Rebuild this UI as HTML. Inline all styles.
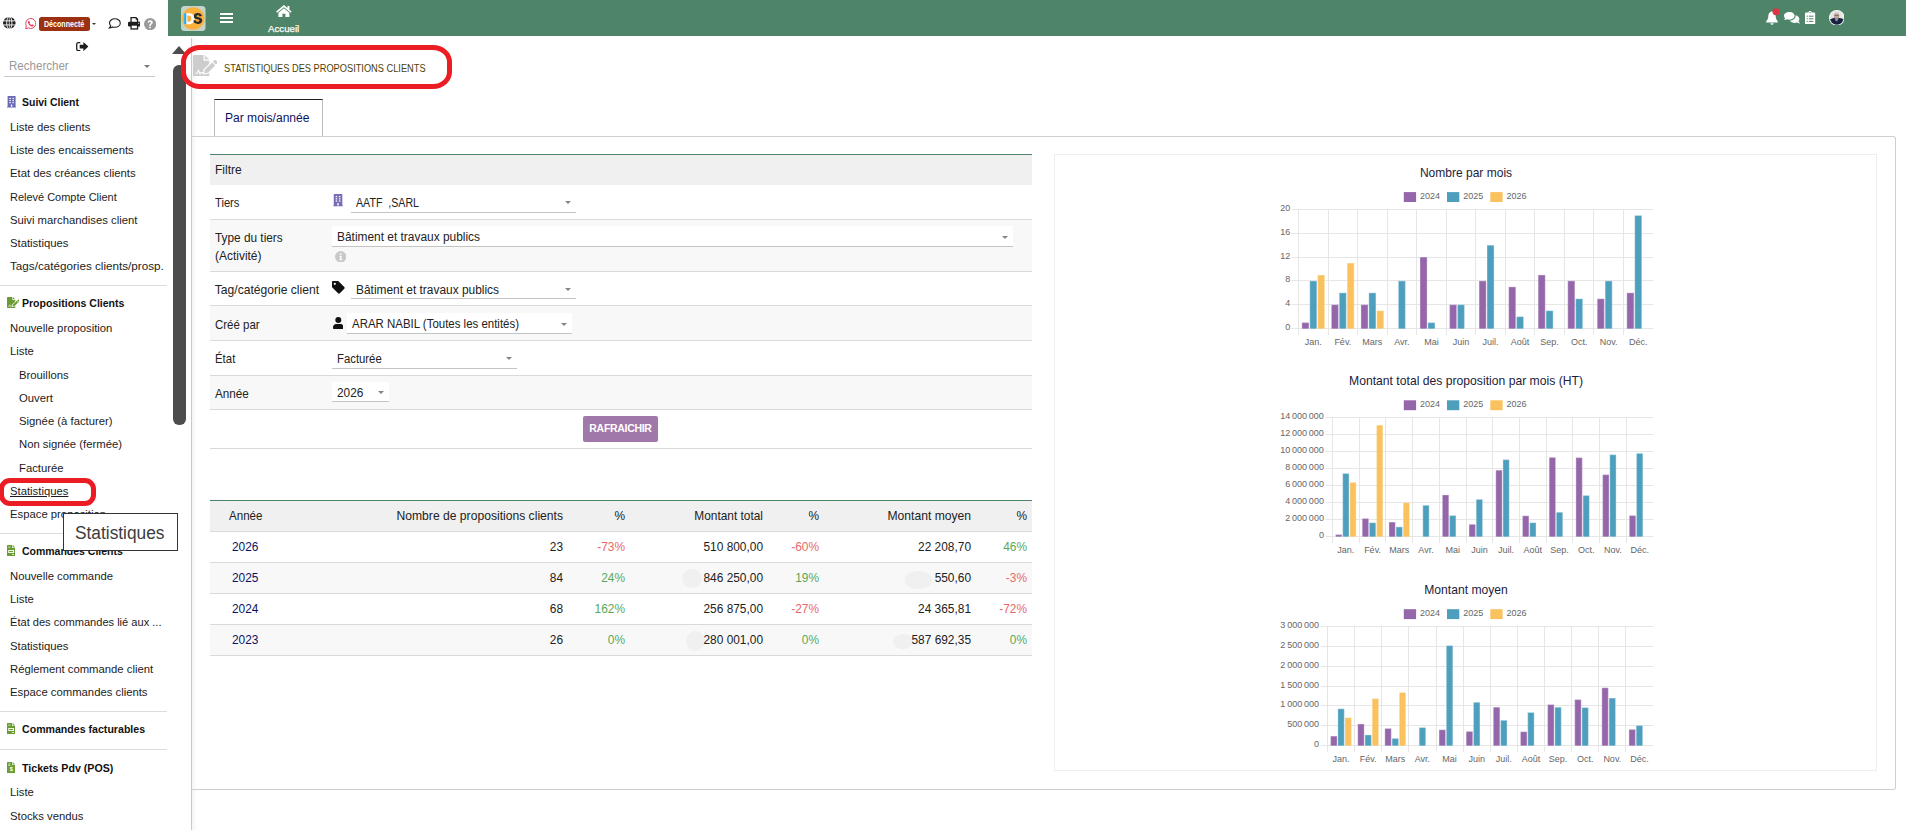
<!DOCTYPE html><html lang="fr"><head>
<meta charset="utf-8">
<title>Statistiques des propositions clients</title>
<style>
*{box-sizing:border-box;margin:0;padding:0}
html,body{width:1906px;height:830px;overflow:hidden;background:#fff}
body{font-family:"Liberation Sans",sans-serif;font-size:12px;color:#222;position:relative}
.abs{position:absolute}
/* header */
#hdr{left:168px;top:0;width:1738px;height:36px;background:#4e8468}
#hdr .home{left:99px;top:22px;width:32px;text-align:center;color:#fff;font-size:11px;line-height:12px}
/* sidebar */
.mi{position:absolute;left:10px;font-size:11.3px;color:#1c1c1c;white-space:nowrap;line-height:14px}
.mi.sub{left:19px}
.mh{position:absolute;left:22px;font-size:11.2px;font-weight:bold;color:#111;white-space:nowrap;line-height:14px}
.sep{position:absolute;left:0;width:167px;height:1px;background:#dcdcdc}
/* tables */
.lbl{margin-top:1px;position:absolute;left:214.800px;font-size:12.1px;color:#222;line-height:15px;white-space:nowrap}
.row{position:absolute;left:210px;width:822px;border-bottom:1px solid #d9d9d9}
.sel{position:absolute;border-bottom:1px solid #c4c4c4;font-size:12.3px;color:#222;line-height:15px;white-space:nowrap;background:#fff}
.sel span{position:absolute;left:5px;top:5px}
.sel i{position:absolute;right:5px;top:10px;width:0;height:0;border-left:3px solid transparent;border-right:3px solid transparent;border-top:3px solid #858585}
.t2 div{margin-top:1px;position:absolute;font-size:11.9px;line-height:15px;white-space:nowrap}
.r{text-align:right}
.red{color:#e9686b}.grn{color:#5aa85a}.lnk{color:#0a1464}
svg text.ax{font-family:"Liberation Sans",sans-serif;font-size:9px;fill:#666;word-spacing:-0.7px}
svg text.lg{font-family:"Liberation Sans",sans-serif;font-size:9px;fill:#666}
svg text.tt{font-family:"Liberation Sans",sans-serif;font-size:12.6px;fill:#1c1c3c}
</style>
</head>
<body>

<!-- ================= HEADER ================= -->
<div id="hdr" class="abs">
  <!-- logo -->
  <svg class="abs" style="left:13px;top:5.5px" width="24.5" height="25" viewBox="0 0 24.5 25">
    <rect x="0" y="0" width="24.5" height="25" rx="3.5" fill="#c6d3ca"></rect>
    <circle cx="12.2" cy="12.5" r="11.3" fill="#fbb03b"></circle>
    <path d="M3.1 7.2h4.4c4.2 0 6 2.3 6 5.5s-1.8 5.5-6 5.5H3.1z" fill="#fff"></path>
    <path d="M6.4 9.6h1c1.9 0 2.9 1.1 2.9 3.1s-1 3.1-2.9 3.1h-1z" fill="#fbb03b"></path>
    <rect x="3.1" y="7.2" width="2.2" height="11" fill="#29abe2"></rect>
    <path d="M21 9.9c-.5-1.9-2-2.9-4.2-2.9-2.4 0-4 1.2-4 3.2 0 1.900 1.300 2.600 3.500 3.100 1.500.35 2.200.6 2.200 1.300 0 .7-.6 1.100-1.600 1.100-1.200 0-1.900-.5-2.100-1.500l-2.600.4c.4 2.200 2.100 3.300 4.600 3.300 2.700 0 4.400-1.300 4.400-3.500 0-2-1.300-2.700-3.700-3.200-1.400-.3-2-.5-2-1.100s.5-.9 1.300-.9c1 0 1.500.4 1.700 1.200z" fill="#2b2b2b"></path>
  </svg>
  <!-- hamburger -->
  <div class="abs" style="left:52.2px;top:13px;width:13px;height:2px;background:#fff"></div>
  <div class="abs" style="left:52.2px;top:17.2px;width:13px;height:2px;background:#fff"></div>
  <div class="abs" style="left:52.2px;top:21.3px;width:13px;height:2px;background:#fff"></div>
  <!-- home -->
  <svg class="abs" style="left:107.800px;top:4.600px" width="15.800" height="12.400" viewBox="-0.2 -0.2 15.800 12.400">
    <path fill="#fff" d="M7.700-.1-.1 6.350l1 1.200L7.700 2.050l6.800 5.500 1-1.200-2.300-1.900V.8h-1.900v2.100z"></path>
    <path fill="#fff" d="M7.700 3.100 2.200 7.550v4.650h4V8.600h3v3.600h4V7.550z"></path>
  </svg>
  <div class="abs" id="acc" style="left: 99.8px; top: 22.5px; font-size: 9.8px; line-height: 12px; color: rgb(255, 255, 255); -webkit-text-stroke: 0.25px rgb(255, 255, 255); white-space: nowrap; transform: scaleX(0.9875); transform-origin: left center;">Accueil</div>
  <!-- bell -->
  <svg class="abs" style="left:1597.500px;top:7.500px" width="14" height="17" viewBox="0 0 14 17">
    <path fill="#fff" d="M6 3.200C3.600 3.700 2.300 5.700 2.300 8.100c0 2.700-.9 3.900-1.800 4.800-.3.300-.4.500-.4.800 0 .5.400.9 1 .9h9.800c.6 0 1-.4 1-.9 0-.3-.1-.5-.4-.8-.9-.9-1.800-2.100-1.800-4.800 0-2.400-1.300-4.400-3.700-4.900z"></path>
    <path fill="#fff" d="M4.400 15.300h3.200c0 .9-.7 1.500-1.600 1.500s-1.600-.6-1.600-1.500z"></path>
    <circle cx="10" cy="3.800" r="3.500" fill="#dc3545"></circle>
  </svg>
  <!-- comments -->
  <svg class="abs" style="left:1616px;top:12px" width="15.500" height="11.500" viewBox="0 0 15.500 11.500">
    <path fill="#fff" d="M5.300 0C2.400 0 0 1.700 0 3.900c0 .9.400 1.800 1.100 2.400-.2.700-.7 1.300-.8 1.400-.1.100-.1.200 0 .3 0 .1.100.1.200.1 1 0 1.900-.4 2.500-.8.700.2 1.500.400 2.300.400 2.900 0 5.300-1.700 5.300-3.900S8.200 0 5.300 0z"></path>
    <path fill="#fff" d="M14.300 9.500c.7-.700 1.100-1.500 1.100-2.400 0-1.800-1.600-3.300-3.800-3.800v.6c0 2.500-2.500 4.500-5.700 4.700.8 1.400 2.700 2.400 4.900 2.400.8 0 1.600-.100 2.300-.400.600.400 1.500.800 2.500.800.100 0 .200 0 .200-.100.100-.100.100-.200 0-.300-.100-.100-.600-.700-.800-1.400z" opacity=".96"></path>
  </svg>
  <!-- clipboard -->
  <svg class="abs" style="left:1637.400px;top:10.800px" width="10.200" height="13.400" viewBox="0 0 10.200 13.400">
    <path fill="#fff" d="M1.100 1.500h2.200C3.500.7 4.200 0 5.100 0s1.600.7 1.800 1.500h2.200c.6 0 1.100.5 1.100 1.100v9.700c0 .6-.5 1.100-1.100 1.100H1.100c-.6 0-1.100-.5-1.100-1.100V2.600c0-.6.5-1.100 1.100-1.100z"></path>
    <g fill="#4e8468"><rect x="1.700" y="4.700" width="1.200" height="1"></rect><rect x="3.800" y="4.700" width="4.600" height="1"></rect><rect x="1.700" y="7.300" width="1.200" height="1"></rect><rect x="3.800" y="7.300" width="4.600" height="1"></rect><rect x="1.700" y="9.900" width="1.200" height="1"></rect><rect x="3.800" y="9.900" width="4.600" height="1"></rect><circle cx="5.100" cy="1.700" r=".6"></circle></g>
  </svg>
  <!-- avatar -->
  <svg class="abs" style="left:1660.600px;top:9.500px" width="15.600" height="15.600" viewBox="0 0 15.600 15.600">
    <defs><clipPath id="avc"><circle cx="7.800" cy="7.800" r="7"></circle></clipPath></defs>
    <circle cx="7.800" cy="7.800" r="7.800" fill="#fff"></circle>
    <g clip-path="url(#avc)">
      <rect x="0" y="0" width="15.600" height="15.600" fill="#e8e6e4"></rect>
      <path d="M0 16V10.500c1.500-1.800 3.500-2.300 4.800-2.500h6c1.300.2 3.300.7 4.800 2.500V16z" fill="#1a2140"></path>
      <ellipse cx="7.600" cy="5.600" rx="2.700" ry="3.200" fill="#c4a898"></ellipse>
      <path d="M4.900 4.800c.2-2.200 1.300-3 2.700-3s2.500.8 2.700 3c-.6-.9-1.600-1.300-2.700-1.300s-2.100.4-2.700 1.300z" fill="#d8d6d4"></path>
      <path d="M5.100 6.800c.6 2 1.400 4.800 2.500 4.800s1.900-2.800 2.500-4.800c-.7.800-1.500 1.100-2.500 1.100s-1.800-.3-2.500-1.100z" fill="#8d8e92"></path>
      <rect x="5.400" y="4.900" width="4.400" height=".7" fill="#555"></rect>
    </g>
  </svg>
</div>

<!-- ================= SIDEBAR ================= -->
<div id="side" class="abs" style="left:0;top:0;width:168px;height:830px">
  <!-- globe -->
  <svg class="abs" style="left:3px;top:17.400px" width="12.600" height="11.800" viewBox="0 0 12 12" preserveAspectRatio="none">
    <circle cx="6" cy="6" r="6" fill="#1d1d1f"></circle>
    <g stroke="#fff" stroke-width=".9" fill="none">
      <line x1="0" y1="3.900" x2="12" y2="3.900"></line><line x1="0" y1="8.100" x2="12" y2="8.100"></line>
      <ellipse cx="6" cy="6" rx="2.500" ry="6.500"></ellipse><line x1="6" y1="0" x2="6" y2="12" stroke-width=".7"></line>
    </g>
  </svg>
  <!-- whatsapp -->
  <svg class="abs" style="left:24.500px;top:17.900px" width="11.200" height="11.300" viewBox="0 0 11.200 11.300">
    <path d="M5.700.5a5 5 0 0 0-4.300 7.500L.6 10.700l2.800-.8A5 5 0 1 0 5.700.5z" fill="#fff" stroke="#e5405e" stroke-width="1"></path>
    <path d="M4 3c.2 0 .4 0 .5.300l.5 1.100c0 .200 0 .300-.1.400l-.4.500c.5.900 1.100 1.400 2 1.800l.5-.6c.1-.1.300-.2.500-.1l1 .5c.2.100.3.200.2.500-.1.600-.7 1.100-1.300 1.100C5.400 8.500 3 6.200 3 4.200 3 3.600 3.400 3 4 3z" fill="#e5405e"></path>
  </svg>
  <!-- badge -->
  <div class="abs" style="left:39px;top:16.900px;width:51px;height:14.100px;background:#9b3110;border-radius:2.500px"></div>
  <div class="abs" id="dec" style="left: 44px; top: 17.5px; font-size: 8.3px; font-weight: bold; line-height: 12px; color: rgb(255, 255, 255); white-space: nowrap; transform: scaleX(0.8548); transform-origin: left center;">Déconnecté</div>
  <div class="abs" style="left:92px;top:23px;width:0;height:0;border-left:2px solid transparent;border-right:2px solid transparent;border-top:2.200px solid #333"></div>
  <!-- comment-o -->
  <svg class="abs" style="left:107.500px;top:18px" width="13.200" height="11.200" viewBox="0 0 13.200 11.200">
    <path d="M6.900.8C3.900.8 1.500 2.700 1.500 5c0 1 .5 2 1.300 2.700-.2.900-.8 1.700-1.700 2.400 1.400 0 2.600-.5 3.400-1.200.7.200 1.500.4 2.400.4 3 0 5.400-1.900 5.400-4.300S9.900.8 6.900.8z" fill="#fff" stroke="#1d1d1f" stroke-width="1.050"></path>
  </svg>
  <!-- print -->
  <svg class="abs" style="left:127.500px;top:17.200px" width="12.600" height="12.600" viewBox="0 0 12.600 12.600">
    <path d="M2.400 0h5.900l1.900 1.900v3.200H2.400z" fill="#1d1d1f"></path>
    <path d="M3.700 1.300h4v1.500h1.200v2.300H3.700z" fill="#fff"></path>
    <rect x="0" y="4.700" width="12.600" height="4.900" rx="1.300" fill="#1d1d1f"></rect>
    <rect x="2.400" y="7.500" width="7.800" height="5.100" fill="#1d1d1f"></rect>
    <rect x="3.700" y="8.700" width="5.200" height="2.600" fill="#fff"></rect>
    <circle cx="10.700" cy="6.300" r=".55" fill="#fff"></circle>
  </svg>
  <!-- help -->
  <svg class="abs" style="left:144.200px;top:17.600px" width="12.200" height="12.200" viewBox="0 0 12.200 12.200">
    <circle cx="6.100" cy="6.100" r="6.100" fill="#9a9a9a"></circle>
    <path d="M3.700 4.500C3.800 3.100 4.800 2.300 6.200 2.300c1.500 0 2.500.8 2.500 2.100 0 1-.5 1.500-1.200 2-.6.400-.8.600-.8 1.200v.3H5.300v-.4c0-.9.300-1.400 1-1.900.6-.4.800-.6.800-1.100 0-.5-.4-.8-.9-.8-.6 0-1 .3-1.100 1z" fill="#fff"></path>
    <rect x="5.200" y="8.700" width="1.600" height="1.500" fill="#fff"></rect>
  </svg>
  <!-- sign-out -->
  <svg class="abs" style="left:76.300px;top:42px" width="12.400" height="9.200" viewBox="0 0 12.400 9.200">
    <path d="M4.300.6H2.400C1.400.6.700 1.400.7 2.300v4.600c0 1 .7 1.700 1.700 1.700h1.900" fill="none" stroke="#1d1d1f" stroke-width="1.300"></path>
    <path d="M7.400 0l5 4.600-5 4.600V6.400H3.700V2.800h3.700z" fill="#1d1d1f"></path>
  </svg>

  <div class="abs" id="rech" style="left: 8.6px; top: 59px; font-size: 12px; color: rgb(153, 153, 153); line-height: 15px; white-space: nowrap; transform: scaleX(0.9624); transform-origin: left center;">Rechercher</div>
  <div class="abs" style="left:4px;top:76px;width:151px;height:1px;background:#c8c8c8"></div>
  <div class="abs" style="left:144px;top:65px;width:0;height:0;border-left:3px solid transparent;border-right:3px solid transparent;border-top:3px solid #777"></div>

  <svg class="abs" style="left:7px;top:96px" width="9.200" height="11.500" viewBox="0 0 9.200 11.500"><path fill="#6a69b4" d="M.6 0h8v10.700h.6v.8H0v-.8h.6z"></path><g fill="#fff"><rect x="2.400" y="1.800" width="1.400" height="1.200"></rect><rect x="5.400" y="1.800" width="1.400" height="1.200"></rect><rect x="2.400" y="3.900" width="1.400" height="1.200"></rect><rect x="5.400" y="3.900" width="1.400" height="1.200"></rect><rect x="2.400" y="6" width="1.400" height="1.200"></rect><rect x="5.400" y="6" width="1.400" height="1.200"></rect><rect x="3.900" y="8.500" width="1.400" height="2.200"></rect></g></svg>
  <div class="mh" style="top: 95px; transform: scaleX(0.9356); transform-origin: left center;">Suivi Client</div>
  <div class="mi" style="top:120px">Liste des clients</div>
  <div class="mi" style="top:143px">Liste des encaissements</div>
  <div class="mi" style="top:166px">Etat des créances clients</div>
  <div class="mi" style="top: 190px; transform: scaleX(0.971); transform-origin: left center;">Relevé Compte Client</div>
  <div class="mi" style="top:213px">Suivi marchandises client</div>
  <div class="mi" style="top:236px">Statistiques</div>
  <div class="mi" style="top: 259px; transform: scaleX(1.0334); transform-origin: left center;">Tags/catégories clients/prosp.</div>
  <div class="sep" style="top:285px"></div>
  <svg class="abs" style="left:6.8px;top:297px" width="12.2" height="11.0" viewBox="0 0 12.200 11"><path fill="#6b9b34" d="M.7 0h4.700v2.900h2.900V11H.7C.300 11 0 10.700 0 10.300V.7C0 .3.300 0 .7 0z"></path><path fill="#6b9b34" d="M6 0l2.300 2.300H6z" opacity=".85"></path><path d="M4.900 10.100l.6-2.900L9.800 2.900l2.300 2.300-4.300 4.300z" fill="#fff"></path><path d="M5.700 9.400l.4-1.900 3.700-3.700 1.500 1.500-3.700 3.700z" fill="#6b9b34"></path><path d="M10.200 3.400l.7-.7c.2-.2.6-.2.800 0l.7.700c.2.2.2.6 0 .800l-.7.700z" fill="#6b9b34"></path><path d="M1.200 9.300h.9l.7-1.500.8 1.900.5-.8h1.200" fill="none" stroke="#fff" stroke-width=".55"></path></svg>
  <div class="mh" style="top: 296px; transform: scaleX(0.9413); transform-origin: left center;">Propositions Clients</div>
  <div class="mi" style="top:321px">Nouvelle proposition</div>
  <div class="mi" style="top:344px">Liste</div>
  <div class="mi sub" style="top:368px">Brouillons</div>
  <div class="mi sub" style="top:391px">Ouvert</div>
  <div class="mi sub" style="top:414px">Signée (à facturer)</div>
  <div class="mi sub" style="top:437px">Non signée (fermée)</div>
  <div class="mi sub" style="top:461px">Facturée</div>
  <div class="mi" style="top:484px;text-decoration:underline">Statistiques</div>
  <div class="mi" style="top:507px">Espace proposition</div>
  <div class="sep" style="top:533px"></div>
  <svg class="abs" style="left:6.8px;top:545.2px" width="8.300" height="11.200" viewBox="0 0 8.300 11.200"><path fill="#6b9b34" d="M.6 0h4.500v3h3.200v7.600c0 .3-.3.600-.6.600H.6c-.3 0-.6-.3-.6-.6V.6C0 .3.300 0 .6 0z"></path><path fill="#6b9b34" d="M5.700 0l2.600 2.500H5.700z" opacity=".9"></path><g fill="#fff"><rect x="1.300" y="1.700" width="2.100" height=".75"></rect><rect x="1.300" y="3.100" width="2.100" height=".75" opacity=".0"></rect><rect x="1.300" y="5" width="5.700" height="3"></rect><rect x="4.900" y="9.100" width="2.100" height=".75"></rect></g><rect x="2.200" y="5.900" width="3.900" height="1.200" fill="#6b9b34"></rect></svg>
  <div class="mh" style="top: 544px; transform: scaleX(0.9371); transform-origin: left center;">Commandes Clients</div>
  <div class="mi" style="top:569px">Nouvelle commande</div>
  <div class="mi" style="top:592px">Liste</div>
  <div class="mi" style="top: 615px; transform: scaleX(0.9808); transform-origin: left center;">État des commandes lié aux ...</div>
  <div class="mi" style="top:639px">Statistiques</div>
  <div class="mi" style="top:662px">Réglement commande client</div>
  <div class="mi" style="top:685px">Espace commandes clients</div>
  <div class="sep" style="top:711px"></div>
  <svg class="abs" style="left:6.8px;top:723.2px" width="8.300" height="11.200" viewBox="0 0 8.300 11.200"><path fill="#6b9b34" d="M.6 0h4.500v3h3.200v7.600c0 .3-.3.600-.6.600H.6c-.3 0-.6-.3-.6-.6V.6C0 .3.300 0 .6 0z"></path><path fill="#6b9b34" d="M5.700 0l2.600 2.500H5.700z" opacity=".9"></path><g fill="#fff"><rect x="1.300" y="1.700" width="2.100" height=".75"></rect><rect x="1.300" y="3.100" width="2.100" height=".75" opacity=".0"></rect><rect x="1.300" y="5" width="5.700" height="3"></rect><rect x="4.900" y="9.100" width="2.100" height=".75"></rect></g><rect x="2.200" y="5.900" width="3.900" height="1.200" fill="#6b9b34"></rect></svg>
  <div class="mh" style="top: 722px; transform: scaleX(0.9473); transform-origin: left center;">Commandes facturables</div>
  <div class="sep" style="top:749px"></div>
  <svg class="abs" style="left:6.8px;top:762.2px" width="8.400" height="11.300" viewBox="0 0 8.400 11.300"><path fill="#6b9b34" d="M.6 0h4.500v3h3.300v7.700c0 .3-.3.600-.6.600H.6c-.3 0-.6-.3-.6-.6V.6C0 .3.300 0 .6 0z"></path><path fill="#6b9b34" d="M5.700 0l2.700 2.500H5.700z" opacity=".9"></path><g fill="#fff"><rect x="1.300" y="1.600" width="2" height=".7"></rect><rect x="1.300" y="2.900" width="2" height=".7"></rect></g><text x="4.200" y="9.400" font-family="Liberation Sans" font-weight="bold" font-size="5.600" fill="#fff" text-anchor="middle">$</text></svg>
  <div class="mh" style="top: 761px; transform: scaleX(0.9493); transform-origin: left center;">Tickets Pdv (POS)</div>
  <div class="mi" style="top:785px">Liste</div>
  <div class="mi" style="top:809px">Stocks vendus</div>
</div>

<!-- scrollbar -->
<div class="abs" style="left:173px;top:65px;width:13px;height:360px;background:#4d4d4d;border-radius:6px"></div>
<div class="abs" style="left:172px;top:46px;width:0;height:0;border-left:7px solid transparent;border-right:7px solid transparent;border-bottom:8px solid #4d4d4d"></div>

<!-- content left border -->
<div class="abs" style="left:192px;top:38px;width:5px;height:792px;background:linear-gradient(90deg,#f4f4f4,#fff)"></div>
<div class="abs" style="left:191px;top:38px;width:1px;height:792px;background:#c9c9c9"></div>

<!-- ================= TITLE ================= -->
<svg class="abs" id="ticon" style="left:193px;top:54.7px" width="23.9" height="21.6" viewBox="0 0 12.200 11"><path fill="#cdcdcd" d="M.7 0h4.700v2.900h2.900V11H.7C.300 11 0 10.700 0 10.300V.7C0 .3.300 0 .7 0z"></path><path fill="#cdcdcd" d="M6 0l2.300 2.300H6z" opacity=".85"></path><path d="M4.900 10.100l.6-2.900L9.800 2.900l2.300 2.300-4.300 4.300z" fill="#fff"></path><path d="M5.700 9.400l.4-1.900 3.700-3.700 1.500 1.500-3.700 3.700z" fill="#cdcdcd"></path><path d="M10.200 3.400l.7-.7c.2-.2.6-.2.800 0l.7.700c.2.2.2.6 0 .800l-.7.700z" fill="#cdcdcd"></path><path d="M1.200 9.300h.9l.7-1.500.8 1.900.5-.8h1.200" fill="none" stroke="#fff" stroke-width=".55"></path></svg>
<div class="abs" id="ttl" style="left: 224px; top: 60.2px; font-size: 11.6px; line-height: 15px; color: rgb(77, 63, 8); white-space: nowrap; transform: scaleX(0.7976); transform-origin: left center;">STATISTIQUES DES PROPOSITIONS CLIENTS</div>
<div class="abs" style="left:181px;top:45px;width:271px;height:44px;border:5px solid #ec1c24;border-radius:19px/17px"></div>

<!-- ================= TAB ================= -->
<div class="abs" style="left:192px;top:136px;width:1704px;height:654px;border:1px solid #cfcfcf;border-left:none;border-radius:0 3px 3px 0"></div>
<div class="abs" style="left:214px;top:99px;width:109px;height:38px;border:1px solid #bbb;border-top:1px solid #222;border-bottom:1px solid #cfcfcf;background:#fff"></div>
<div class="abs" id="tabt" style="left: 224.7px; top: 111px; font-size: 12.3px; line-height: 15px; color: rgb(10, 20, 100); white-space: nowrap; transform: scaleX(0.981); transform-origin: left center;">Par mois/année</div>

<!-- ================= FILTER TABLE ================= -->
<div class="abs" style="left:210px;top:154px;width:822px;height:1px;background:#4e8468"></div>
<div class="row" style="top:155px;height:30px;background:#f0f0f0;border-bottom:none"></div>
<div class="row" style="top:185px;height:35px"></div>
<div class="row" style="top:220px;height:52px;background:#f8f8f8"></div>
<div class="row" style="top:272px;height:34px"></div>
<div class="row" style="top:306px;height:35px;background:#f8f8f8"></div>
<div class="row" style="top:341px;height:35px"></div>
<div class="row" style="top:376px;height:34px;background:#f8f8f8"></div>
<div class="row" style="top:410px;height:39px"></div>

<div class="lbl" style="top: 162px; transform: scaleX(0.9898); transform-origin: left center;">Filtre</div>
<div class="lbl" style="top: 195px; transform: scaleX(0.9229); transform-origin: left center;">Tiers</div>
<div class="lbl" style="top: 230px; transform: scaleX(0.9776); transform-origin: left center;">Type du tiers</div>
<div class="lbl" style="top: 248px; transform: scaleX(0.9884); transform-origin: left center;">(Activité)</div>
<div class="lbl" style="top: 282px; transform: scaleX(1); transform-origin: left center;">Tag/catégorie client</div>
<div class="lbl" style="top: 317px; transform: scaleX(0.9498); transform-origin: left center;">Créé par</div>
<div class="lbl" style="top: 351px; transform: scaleX(0.9435); transform-origin: left center;">État</div>
<div class="lbl" style="top: 386px; transform: scaleX(0.969); transform-origin: left center;">Année</div>

<svg class="abs" style="left:332.6px;top:194.3px" width="10.100" height="12.300" viewBox="0 0 9.200 11.500"><path fill="#7a6bb6" d="M.6 0h8v10.700h.6v.8H0v-.8h.6z"></path><g fill="#fff"><rect x="2.400" y="1.800" width="1.400" height="1.200"></rect><rect x="5.400" y="1.800" width="1.400" height="1.200"></rect><rect x="2.400" y="3.900" width="1.400" height="1.200"></rect><rect x="5.400" y="3.900" width="1.400" height="1.200"></rect><rect x="2.400" y="6" width="1.400" height="1.200"></rect><rect x="5.400" y="6" width="1.400" height="1.200"></rect><rect x="3.900" y="8.500" width="1.400" height="2.200"></rect></g></svg>
<svg class="abs" style="left:335px;top:250.800px" width="11.400" height="11.400" viewBox="0 0 11.400 11.400"><circle cx="5.700" cy="5.700" r="5.700" fill="#c9c9c9"></circle><circle cx="5.700" cy="3.100" r=".95" fill="#fff"></circle><path d="M4.500 4.900h2v3.300h.6v1H4.400v-1h.7V5.900h-.6z" fill="#fff"></path></svg>
<svg class="abs" style="left:332.200px;top:281.200px" width="12.700" height="12.700" viewBox="0 0 12.700 12.700"><path d="M0 1.200C0 .5.500 0 1.200 0h4.500c.3 0 .6.100.8.300l5.800 5.800c.5.500.5 1.200 0 1.700l-4.500 4.500c-.5.500-1.200.5-1.700 0L.3 6.500C.1 6.300 0 6 0 5.700z" fill="#111"></path><circle cx="2.800" cy="2.800" r="1.100" fill="#fff"></circle></svg>
<svg class="abs" style="left:332.700px;top:316.700px" width="10.600" height="12.200" viewBox="0 0 10.600 12.200"><circle cx="5.300" cy="3" r="3" fill="#111"></circle><path d="M3.200 6.900h4.200c1.800 0 3.200 1.400 3.200 3.200v1c0 .6-.5 1.100-1.100 1.100H1.100C.5 12.200 0 11.700 0 11.100v-1c0-1.800 1.400-3.200 3.200-3.200z" fill="#111"></path></svg>
<div class="sel" style="left:351px;top:191px;width:225px;height:22px"><span style="transform: scaleX(0.8643); transform-origin: left center;">AATF &nbsp;,SARL</span><i></i></div>
<div class="sel" style="left:332px;top:226px;width:681px;height:21px"><span style="top: 4px; transform: scaleX(0.9686); transform-origin: left center;">Bâtiment et travaux publics</span><i></i></div>
<div class="sel" style="left:351px;top:278px;width:225px;height:21px"><span style="transform: scaleX(0.9686); transform-origin: left center;">Bâtiment et travaux publics</span><i></i></div>
<div class="sel" style="left:347px;top:313px;width:225px;height:21px"><span style="top: 4px; transform: scaleX(0.9314); transform-origin: left center;">ARAR NABIL (Toutes les entités)</span><i></i></div>
<div class="sel" style="left:332px;top:347px;width:185px;height:22px"><span style="transform: scaleX(0.9211); transform-origin: left center;">Facturée</span><i></i></div>
<div class="sel" style="left:332px;top:382px;width:57px;height:20px"><span style="top: 4px; transform: scaleX(0.9613); transform-origin: left center;">2026</span><i style="top:9px"></i></div>

<div class="abs" style="left:583px;top:416px;width:75px;height:26px;background:#a078aa;border-radius:2px;color:#fff;font-size:10.5px;font-weight:bold;text-align:center;line-height:25px;letter-spacing:-0.3px">RAFRAICHIR</div>

<!-- ================= RESULT TABLE ================= -->
<div class="abs" style="left:210px;top:500px;width:822px;height:1px;background:#4e8468"></div>
<div class="row" style="top:501px;height:31px;background:#f0f0f0"></div>
<div class="row" style="top:532px;height:31px"></div>
<div class="row" style="top:563px;height:31px;background:#f8f8f8"></div>
<div class="row" style="top:594px;height:31px"></div>
<div class="row" style="top:625px;height:31px;background:#f8f8f8"></div>
<div class="abs" style="left:681.500px;top:569px;width:20px;height:18.500px;background:#f0f0f0;border-radius:50%"></div>
<div class="abs" style="left:904.500px;top:571px;width:27.500px;height:17.500px;background:#f0f0f0;border-radius:50%"></div>
<div class="abs" style="left:686px;top:630.500px;width:18.500px;height:20.500px;background:#f0f0f0;border-radius:50%"></div>
<div class="abs" style="left:893px;top:634px;width:19.500px;height:15.200px;background:#f0f0f0;border-radius:50%"></div>
<div class="t2">
  <div style="left: 229px; top: 508px; transform: scaleX(0.9712); transform-origin: left center;">Année</div>
  <div class="r" style="left: 363px; width: 200px; top: 508px; transform: scaleX(1.0199); transform-origin: right center;">Nombre de propositions clients</div>
  <div class="r" style="left:575px;width:50px;top:508px">%</div>
  <div class="r" style="left:643px;width:120px;top:508px">Montant total</div>
  <div class="r" style="left:769px;width:50px;top:508px">%</div>
  <div class="r" style="left: 851px; width: 120px; top: 508px; transform: scaleX(1.0187); transform-origin: right center;">Montant moyen</div>
  <div class="r" style="left:977px;width:50px;top:508px">%</div>

  <div class="lnk" style="left:232px;top:539px">2026</div>
  <div class="r" style="left:363px;width:200px;top:539px">23</div>
  <div class="r red" style="left:575px;width:50px;top:539px">-73%</div>
  <div class="r" style="left:643px;width:120px;top:539px">510 800,00</div>
  <div class="r red" style="left:769px;width:50px;top:539px">-60%</div>
  <div class="r" style="left:851px;width:120px;top:539px">22 208,70</div>
  <div class="r grn" style="left:977px;width:50px;top:539px">46%</div>

  <div class="lnk" style="left:232px;top:570px">2025</div>
  <div class="r" style="left:363px;width:200px;top:570px">84</div>
  <div class="r grn" style="left:575px;width:50px;top:570px">24%</div>
  <div class="r" style="left:643px;width:120px;top:570px">846 250,00</div>
  <div class="r grn" style="left:769px;width:50px;top:570px">19%</div>
  <div class="r" style="left:851px;width:120px;top:570px">550,60</div>
  <div class="r red" style="left:977px;width:50px;top:570px">-3%</div>

  <div class="lnk" style="left:232px;top:601px">2024</div>
  <div class="r" style="left:363px;width:200px;top:601px">68</div>
  <div class="r grn" style="left:575px;width:50px;top:601px">162%</div>
  <div class="r" style="left:643px;width:120px;top:601px">256 875,00</div>
  <div class="r red" style="left:769px;width:50px;top:601px">-27%</div>
  <div class="r" style="left:851px;width:120px;top:601px">24 365,81</div>
  <div class="r red" style="left:977px;width:50px;top:601px">-72%</div>

  <div class="lnk" style="left:232px;top:632px">2023</div>
  <div class="r" style="left:363px;width:200px;top:632px">26</div>
  <div class="r grn" style="left:575px;width:50px;top:632px">0%</div>
  <div class="r" style="left:643px;width:120px;top:632px">280 001,00</div>
  <div class="r grn" style="left:769px;width:50px;top:632px">0%</div>
  <div class="r" style="left:851px;width:120px;top:632px">587 692,35</div>
  <div class="r grn" style="left:977px;width:50px;top:632px">0%</div>
</div>

<!-- ================= CHART PANEL ================= -->
<div class="abs" style="left:1054px;top:154px;width:823px;height:617px;border:1px solid #eeeeee"></div>
<svg class="abs" style="left:0;top:0;pointer-events:none" width="1906" height="830" viewBox="0 0 1906 830" shape-rendering="crispEdges">
<g shape-rendering="auto">
<line x1="1291.50" y1="328.50" x2="1653.00" y2="328.50" stroke="#e3e3e3" stroke-width="0.9"></line>
<text x="1290.30" y="329.80" text-anchor="end" class="ax">0</text>
<line x1="1291.50" y1="304.50" x2="1653.00" y2="304.50" stroke="#e3e3e3" stroke-width="0.9"></line>
<text x="1290.30" y="305.80" text-anchor="end" class="ax">4</text>
<line x1="1291.50" y1="280.50" x2="1653.00" y2="280.50" stroke="#e3e3e3" stroke-width="0.9"></line>
<text x="1290.30" y="281.80" text-anchor="end" class="ax">8</text>
<line x1="1291.50" y1="257.50" x2="1653.00" y2="257.50" stroke="#e3e3e3" stroke-width="0.9"></line>
<text x="1290.30" y="258.80" text-anchor="end" class="ax">12</text>
<line x1="1291.50" y1="233.50" x2="1653.00" y2="233.50" stroke="#e3e3e3" stroke-width="0.9"></line>
<text x="1290.30" y="234.80" text-anchor="end" class="ax">16</text>
<line x1="1291.50" y1="209.50" x2="1653.00" y2="209.50" stroke="#e3e3e3" stroke-width="0.9"></line>
<text x="1290.30" y="210.80" text-anchor="end" class="ax">20</text>
<line x1="1298.50" y1="209.00" x2="1298.50" y2="334.80" stroke="#e3e3e3" stroke-width="0.9"></line>
<line x1="1328.50" y1="209.00" x2="1328.50" y2="334.80" stroke="#e3e3e3" stroke-width="0.9"></line>
<line x1="1357.50" y1="209.00" x2="1357.50" y2="334.80" stroke="#e3e3e3" stroke-width="0.9"></line>
<line x1="1387.50" y1="209.00" x2="1387.50" y2="334.80" stroke="#e3e3e3" stroke-width="0.9"></line>
<line x1="1416.50" y1="209.00" x2="1416.50" y2="334.80" stroke="#e3e3e3" stroke-width="0.9"></line>
<line x1="1446.50" y1="209.00" x2="1446.50" y2="334.80" stroke="#e3e3e3" stroke-width="0.9"></line>
<line x1="1475.50" y1="209.00" x2="1475.50" y2="334.80" stroke="#e3e3e3" stroke-width="0.9"></line>
<line x1="1505.50" y1="209.00" x2="1505.50" y2="334.80" stroke="#e3e3e3" stroke-width="0.9"></line>
<line x1="1534.50" y1="209.00" x2="1534.50" y2="334.80" stroke="#e3e3e3" stroke-width="0.9"></line>
<line x1="1564.50" y1="209.00" x2="1564.50" y2="334.80" stroke="#e3e3e3" stroke-width="0.9"></line>
<line x1="1593.50" y1="209.00" x2="1593.50" y2="334.80" stroke="#e3e3e3" stroke-width="0.9"></line>
<line x1="1623.50" y1="209.00" x2="1623.50" y2="334.80" stroke="#e3e3e3" stroke-width="0.9"></line>
<rect x="1301.85" y="322.55" width="7.09" height="5.95" fill="#b391c3"></rect>
<rect x="1302.45" y="323.15" width="5.89" height="5.35" fill="#9467aa"></rect>
<rect x="1331.39" y="304.70" width="7.09" height="23.80" fill="#b391c3"></rect>
<rect x="1331.99" y="305.30" width="5.89" height="23.20" fill="#9467aa"></rect>
<rect x="1360.93" y="304.70" width="7.09" height="23.80" fill="#b391c3"></rect>
<rect x="1361.53" y="305.30" width="5.89" height="23.20" fill="#9467aa"></rect>
<rect x="1420.01" y="257.10" width="7.09" height="71.40" fill="#b391c3"></rect>
<rect x="1420.61" y="257.70" width="5.89" height="70.80" fill="#9467aa"></rect>
<rect x="1449.56" y="304.70" width="7.09" height="23.80" fill="#b391c3"></rect>
<rect x="1450.16" y="305.30" width="5.89" height="23.20" fill="#9467aa"></rect>
<rect x="1479.10" y="280.90" width="7.09" height="47.60" fill="#b391c3"></rect>
<rect x="1479.70" y="281.50" width="5.89" height="47.00" fill="#9467aa"></rect>
<rect x="1508.64" y="286.85" width="7.09" height="41.65" fill="#b391c3"></rect>
<rect x="1509.24" y="287.45" width="5.89" height="41.05" fill="#9467aa"></rect>
<rect x="1538.18" y="274.95" width="7.09" height="53.55" fill="#b391c3"></rect>
<rect x="1538.78" y="275.55" width="5.89" height="52.95" fill="#9467aa"></rect>
<rect x="1567.72" y="280.90" width="7.09" height="47.60" fill="#b391c3"></rect>
<rect x="1568.32" y="281.50" width="5.89" height="47.00" fill="#9467aa"></rect>
<rect x="1597.26" y="298.75" width="7.09" height="29.75" fill="#b391c3"></rect>
<rect x="1597.86" y="299.35" width="5.89" height="29.15" fill="#9467aa"></rect>
<rect x="1626.81" y="292.80" width="7.09" height="35.70" fill="#b391c3"></rect>
<rect x="1627.41" y="293.40" width="5.89" height="35.10" fill="#9467aa"></rect>
<rect x="1309.73" y="280.90" width="7.09" height="47.60" fill="#86bfd3"></rect>
<rect x="1310.33" y="281.50" width="5.89" height="47.00" fill="#4e9fbd"></rect>
<rect x="1339.27" y="292.80" width="7.09" height="35.70" fill="#86bfd3"></rect>
<rect x="1339.87" y="293.40" width="5.89" height="35.10" fill="#4e9fbd"></rect>
<rect x="1368.81" y="292.80" width="7.09" height="35.70" fill="#86bfd3"></rect>
<rect x="1369.41" y="293.40" width="5.89" height="35.10" fill="#4e9fbd"></rect>
<rect x="1398.35" y="280.90" width="7.09" height="47.60" fill="#86bfd3"></rect>
<rect x="1398.95" y="281.50" width="5.89" height="47.00" fill="#4e9fbd"></rect>
<rect x="1427.89" y="322.55" width="7.09" height="5.95" fill="#86bfd3"></rect>
<rect x="1428.49" y="323.15" width="5.89" height="5.35" fill="#4e9fbd"></rect>
<rect x="1457.43" y="304.70" width="7.09" height="23.80" fill="#86bfd3"></rect>
<rect x="1458.03" y="305.30" width="5.89" height="23.20" fill="#4e9fbd"></rect>
<rect x="1486.98" y="245.20" width="7.09" height="83.30" fill="#86bfd3"></rect>
<rect x="1487.58" y="245.80" width="5.89" height="82.70" fill="#4e9fbd"></rect>
<rect x="1516.52" y="316.60" width="7.09" height="11.90" fill="#86bfd3"></rect>
<rect x="1517.12" y="317.20" width="5.89" height="11.30" fill="#4e9fbd"></rect>
<rect x="1546.06" y="310.65" width="7.09" height="17.85" fill="#86bfd3"></rect>
<rect x="1546.66" y="311.25" width="5.89" height="17.25" fill="#4e9fbd"></rect>
<rect x="1575.60" y="298.75" width="7.09" height="29.75" fill="#86bfd3"></rect>
<rect x="1576.20" y="299.35" width="5.89" height="29.15" fill="#4e9fbd"></rect>
<rect x="1605.14" y="280.90" width="7.09" height="47.60" fill="#86bfd3"></rect>
<rect x="1605.74" y="281.50" width="5.89" height="47.00" fill="#4e9fbd"></rect>
<rect x="1634.68" y="215.45" width="7.09" height="113.05" fill="#86bfd3"></rect>
<rect x="1635.28" y="216.05" width="5.89" height="112.45" fill="#4e9fbd"></rect>
<rect x="1317.60" y="274.95" width="7.09" height="53.55" fill="#fbd794"></rect>
<rect x="1318.20" y="275.55" width="5.89" height="52.95" fill="#f9c25f"></rect>
<rect x="1347.15" y="263.05" width="7.09" height="65.45" fill="#fbd794"></rect>
<rect x="1347.75" y="263.65" width="5.89" height="64.85" fill="#f9c25f"></rect>
<rect x="1376.69" y="310.65" width="7.09" height="17.85" fill="#fbd794"></rect>
<rect x="1377.29" y="311.25" width="5.89" height="17.25" fill="#f9c25f"></rect>
<text x="1313.27" y="344.90" text-anchor="middle" class="ax">Jan.</text>
<text x="1342.81" y="344.90" text-anchor="middle" class="ax">Fév.</text>
<text x="1372.35" y="344.90" text-anchor="middle" class="ax">Mars</text>
<text x="1401.90" y="344.90" text-anchor="middle" class="ax">Avr.</text>
<text x="1431.44" y="344.90" text-anchor="middle" class="ax">Mai</text>
<text x="1460.98" y="344.90" text-anchor="middle" class="ax">Juin</text>
<text x="1490.52" y="344.90" text-anchor="middle" class="ax">Juil.</text>
<text x="1520.06" y="344.90" text-anchor="middle" class="ax">Août</text>
<text x="1549.60" y="344.90" text-anchor="middle" class="ax">Sep.</text>
<text x="1579.15" y="344.90" text-anchor="middle" class="ax">Oct.</text>
<text x="1608.69" y="344.90" text-anchor="middle" class="ax">Nov.</text>
<text x="1638.23" y="344.90" text-anchor="middle" class="ax">Déc.</text>
<text x="1466" y="177.00" text-anchor="middle" class="tt" textLength="92.2" lengthAdjust="spacingAndGlyphs">Nombre par mois</text>
<rect x="1403.8" y="192.1" width="12.3" height="9.9" fill="#9467aa"></rect>
<text x="1420.00" y="198.80" class="lg">2024</text>
<rect x="1447.0" y="192.1" width="12.3" height="9.9" fill="#4e9fbd"></rect>
<text x="1463.20" y="198.80" class="lg">2025</text>
<rect x="1490.3" y="192.1" width="12.3" height="9.9" fill="#f9c25f"></rect>
<text x="1506.50" y="198.80" class="lg">2026</text>
<line x1="1325.50" y1="536.50" x2="1653.00" y2="536.50" stroke="#e3e3e3" stroke-width="0.9"></line>
<text x="1323.90" y="537.80" text-anchor="end" class="ax">0</text>
<line x1="1325.50" y1="519.50" x2="1653.00" y2="519.50" stroke="#e3e3e3" stroke-width="0.9"></line>
<text x="1323.90" y="520.80" text-anchor="end" class="ax">2 000 000</text>
<line x1="1325.50" y1="502.50" x2="1653.00" y2="502.50" stroke="#e3e3e3" stroke-width="0.9"></line>
<text x="1323.90" y="503.80" text-anchor="end" class="ax">4 000 000</text>
<line x1="1325.50" y1="485.50" x2="1653.00" y2="485.50" stroke="#e3e3e3" stroke-width="0.9"></line>
<text x="1323.90" y="486.80" text-anchor="end" class="ax">6 000 000</text>
<line x1="1325.50" y1="468.50" x2="1653.00" y2="468.50" stroke="#e3e3e3" stroke-width="0.9"></line>
<text x="1323.90" y="469.80" text-anchor="end" class="ax">8 000 000</text>
<line x1="1325.50" y1="451.50" x2="1653.00" y2="451.50" stroke="#e3e3e3" stroke-width="0.9"></line>
<text x="1323.90" y="452.80" text-anchor="end" class="ax">10 000 000</text>
<line x1="1325.50" y1="434.50" x2="1653.00" y2="434.50" stroke="#e3e3e3" stroke-width="0.9"></line>
<text x="1323.90" y="435.80" text-anchor="end" class="ax">12 000 000</text>
<line x1="1325.50" y1="417.50" x2="1653.00" y2="417.50" stroke="#e3e3e3" stroke-width="0.9"></line>
<text x="1323.90" y="418.80" text-anchor="end" class="ax">14 000 000</text>
<line x1="1332.50" y1="417.00" x2="1332.50" y2="542.80" stroke="#e3e3e3" stroke-width="0.9"></line>
<line x1="1359.50" y1="417.00" x2="1359.50" y2="542.80" stroke="#e3e3e3" stroke-width="0.9"></line>
<line x1="1385.50" y1="417.00" x2="1385.50" y2="542.80" stroke="#e3e3e3" stroke-width="0.9"></line>
<line x1="1412.50" y1="417.00" x2="1412.50" y2="542.80" stroke="#e3e3e3" stroke-width="0.9"></line>
<line x1="1439.50" y1="417.00" x2="1439.50" y2="542.80" stroke="#e3e3e3" stroke-width="0.9"></line>
<line x1="1466.50" y1="417.00" x2="1466.50" y2="542.80" stroke="#e3e3e3" stroke-width="0.9"></line>
<line x1="1492.50" y1="417.00" x2="1492.50" y2="542.80" stroke="#e3e3e3" stroke-width="0.9"></line>
<line x1="1519.50" y1="417.00" x2="1519.50" y2="542.80" stroke="#e3e3e3" stroke-width="0.9"></line>
<line x1="1546.50" y1="417.00" x2="1546.50" y2="542.80" stroke="#e3e3e3" stroke-width="0.9"></line>
<line x1="1572.50" y1="417.00" x2="1572.50" y2="542.80" stroke="#e3e3e3" stroke-width="0.9"></line>
<line x1="1599.50" y1="417.00" x2="1599.50" y2="542.80" stroke="#e3e3e3" stroke-width="0.9"></line>
<line x1="1626.50" y1="417.00" x2="1626.50" y2="542.80" stroke="#e3e3e3" stroke-width="0.9"></line>
<rect x="1335.53" y="534.54" width="6.41" height="1.96" fill="#b391c3"></rect>
<rect x="1336.13" y="535.14" width="5.21" height="1.36" fill="#9467aa"></rect>
<rect x="1362.24" y="518.48" width="6.41" height="18.02" fill="#b391c3"></rect>
<rect x="1362.84" y="519.08" width="5.21" height="17.42" fill="#9467aa"></rect>
<rect x="1388.94" y="522.13" width="6.41" height="14.37" fill="#b391c3"></rect>
<rect x="1389.54" y="522.74" width="5.21" height="13.77" fill="#9467aa"></rect>
<rect x="1442.36" y="494.94" width="6.41" height="41.56" fill="#b391c3"></rect>
<rect x="1442.96" y="495.54" width="5.21" height="40.96" fill="#9467aa"></rect>
<rect x="1469.07" y="524.35" width="6.41" height="12.15" fill="#b391c3"></rect>
<rect x="1469.67" y="524.95" width="5.21" height="11.55" fill="#9467aa"></rect>
<rect x="1495.78" y="470.20" width="6.41" height="66.30" fill="#b391c3"></rect>
<rect x="1496.38" y="470.80" width="5.21" height="65.70" fill="#9467aa"></rect>
<rect x="1522.49" y="515.76" width="6.41" height="20.74" fill="#b391c3"></rect>
<rect x="1523.09" y="516.36" width="5.21" height="20.14" fill="#9467aa"></rect>
<rect x="1549.19" y="457.37" width="6.41" height="79.13" fill="#b391c3"></rect>
<rect x="1549.79" y="457.97" width="5.21" height="78.53" fill="#9467aa"></rect>
<rect x="1575.90" y="457.62" width="6.41" height="78.88" fill="#b391c3"></rect>
<rect x="1576.50" y="458.22" width="5.21" height="78.28" fill="#9467aa"></rect>
<rect x="1602.61" y="474.62" width="6.41" height="61.88" fill="#b391c3"></rect>
<rect x="1603.21" y="475.22" width="5.21" height="61.28" fill="#9467aa"></rect>
<rect x="1629.32" y="515.50" width="6.41" height="21.00" fill="#b391c3"></rect>
<rect x="1629.92" y="516.11" width="5.21" height="20.40" fill="#9467aa"></rect>
<rect x="1342.65" y="473.43" width="6.41" height="63.07" fill="#86bfd3"></rect>
<rect x="1343.25" y="474.03" width="5.21" height="62.47" fill="#4e9fbd"></rect>
<rect x="1369.36" y="522.64" width="6.41" height="13.86" fill="#86bfd3"></rect>
<rect x="1369.96" y="523.25" width="5.21" height="13.26" fill="#4e9fbd"></rect>
<rect x="1396.07" y="526.89" width="6.41" height="9.61" fill="#86bfd3"></rect>
<rect x="1396.67" y="527.50" width="5.21" height="9.01" fill="#4e9fbd"></rect>
<rect x="1422.77" y="505.31" width="6.41" height="31.19" fill="#86bfd3"></rect>
<rect x="1423.37" y="505.91" width="5.21" height="30.59" fill="#4e9fbd"></rect>
<rect x="1449.48" y="515.50" width="6.41" height="21.00" fill="#86bfd3"></rect>
<rect x="1450.08" y="516.11" width="5.21" height="20.40" fill="#4e9fbd"></rect>
<rect x="1476.19" y="499.36" width="6.41" height="37.14" fill="#86bfd3"></rect>
<rect x="1476.79" y="499.96" width="5.21" height="36.54" fill="#4e9fbd"></rect>
<rect x="1502.90" y="459.57" width="6.41" height="76.93" fill="#86bfd3"></rect>
<rect x="1503.50" y="460.18" width="5.21" height="76.33" fill="#4e9fbd"></rect>
<rect x="1529.61" y="522.64" width="6.41" height="13.86" fill="#86bfd3"></rect>
<rect x="1530.21" y="523.25" width="5.21" height="13.26" fill="#4e9fbd"></rect>
<rect x="1556.32" y="512.27" width="6.41" height="24.23" fill="#86bfd3"></rect>
<rect x="1556.92" y="512.88" width="5.21" height="23.63" fill="#4e9fbd"></rect>
<rect x="1583.02" y="495.44" width="6.41" height="41.06" fill="#86bfd3"></rect>
<rect x="1583.62" y="496.05" width="5.21" height="40.46" fill="#4e9fbd"></rect>
<rect x="1609.73" y="454.64" width="6.41" height="81.86" fill="#86bfd3"></rect>
<rect x="1610.33" y="455.25" width="5.21" height="81.26" fill="#4e9fbd"></rect>
<rect x="1636.44" y="453.37" width="6.41" height="83.13" fill="#86bfd3"></rect>
<rect x="1637.04" y="453.97" width="5.21" height="82.53" fill="#4e9fbd"></rect>
<rect x="1349.77" y="482.36" width="6.41" height="54.14" fill="#fbd794"></rect>
<rect x="1350.37" y="482.96" width="5.21" height="53.54" fill="#f9c25f"></rect>
<rect x="1376.48" y="425.15" width="6.41" height="111.35" fill="#fbd794"></rect>
<rect x="1377.08" y="425.75" width="5.21" height="110.75" fill="#f9c25f"></rect>
<rect x="1403.19" y="502.58" width="6.41" height="33.92" fill="#fbd794"></rect>
<rect x="1403.79" y="503.19" width="5.21" height="33.32" fill="#f9c25f"></rect>
<text x="1345.85" y="552.90" text-anchor="middle" class="ax">Jan.</text>
<text x="1372.56" y="552.90" text-anchor="middle" class="ax">Fév.</text>
<text x="1399.27" y="552.90" text-anchor="middle" class="ax">Mars</text>
<text x="1425.98" y="552.90" text-anchor="middle" class="ax">Avr.</text>
<text x="1452.69" y="552.90" text-anchor="middle" class="ax">Mai</text>
<text x="1479.40" y="552.90" text-anchor="middle" class="ax">Juin</text>
<text x="1506.10" y="552.90" text-anchor="middle" class="ax">Juil.</text>
<text x="1532.81" y="552.90" text-anchor="middle" class="ax">Août</text>
<text x="1559.52" y="552.90" text-anchor="middle" class="ax">Sep.</text>
<text x="1586.23" y="552.90" text-anchor="middle" class="ax">Oct.</text>
<text x="1612.94" y="552.90" text-anchor="middle" class="ax">Nov.</text>
<text x="1639.65" y="552.90" text-anchor="middle" class="ax">Déc.</text>
<text x="1466" y="385.00" text-anchor="middle" class="tt" textLength="234" lengthAdjust="spacingAndGlyphs">Montant total des proposition par mois (HT)</text>
<rect x="1403.8" y="400.3" width="12.3" height="9.9" fill="#9467aa"></rect>
<text x="1420.00" y="407.00" class="lg">2024</text>
<rect x="1447.0" y="400.3" width="12.3" height="9.9" fill="#4e9fbd"></rect>
<text x="1463.20" y="407.00" class="lg">2025</text>
<rect x="1490.3" y="400.3" width="12.3" height="9.9" fill="#f9c25f"></rect>
<text x="1506.50" y="407.00" class="lg">2026</text>
<line x1="1320.50" y1="745.50" x2="1653.00" y2="745.50" stroke="#e3e3e3" stroke-width="0.9"></line>
<text x="1319.00" y="746.80" text-anchor="end" class="ax">0</text>
<line x1="1320.50" y1="725.50" x2="1653.00" y2="725.50" stroke="#e3e3e3" stroke-width="0.9"></line>
<text x="1319.00" y="726.80" text-anchor="end" class="ax">500 000</text>
<line x1="1320.50" y1="705.50" x2="1653.00" y2="705.50" stroke="#e3e3e3" stroke-width="0.9"></line>
<text x="1319.00" y="706.80" text-anchor="end" class="ax">1 000 000</text>
<line x1="1320.50" y1="686.50" x2="1653.00" y2="686.50" stroke="#e3e3e3" stroke-width="0.9"></line>
<text x="1319.00" y="687.80" text-anchor="end" class="ax">1 500 000</text>
<line x1="1320.50" y1="666.50" x2="1653.00" y2="666.50" stroke="#e3e3e3" stroke-width="0.9"></line>
<text x="1319.00" y="667.80" text-anchor="end" class="ax">2 000 000</text>
<line x1="1320.50" y1="646.50" x2="1653.00" y2="646.50" stroke="#e3e3e3" stroke-width="0.9"></line>
<text x="1319.00" y="647.80" text-anchor="end" class="ax">2 500 000</text>
<line x1="1320.50" y1="626.50" x2="1653.00" y2="626.50" stroke="#e3e3e3" stroke-width="0.9"></line>
<text x="1319.00" y="627.80" text-anchor="end" class="ax">3 000 000</text>
<line x1="1327.50" y1="626.00" x2="1327.50" y2="751.80" stroke="#e3e3e3" stroke-width="0.9"></line>
<line x1="1354.50" y1="626.00" x2="1354.50" y2="751.80" stroke="#e3e3e3" stroke-width="0.9"></line>
<line x1="1381.50" y1="626.00" x2="1381.50" y2="751.80" stroke="#e3e3e3" stroke-width="0.9"></line>
<line x1="1408.50" y1="626.00" x2="1408.50" y2="751.80" stroke="#e3e3e3" stroke-width="0.9"></line>
<line x1="1436.50" y1="626.00" x2="1436.50" y2="751.80" stroke="#e3e3e3" stroke-width="0.9"></line>
<line x1="1463.50" y1="626.00" x2="1463.50" y2="751.80" stroke="#e3e3e3" stroke-width="0.9"></line>
<line x1="1490.50" y1="626.00" x2="1490.50" y2="751.80" stroke="#e3e3e3" stroke-width="0.9"></line>
<line x1="1517.50" y1="626.00" x2="1517.50" y2="751.80" stroke="#e3e3e3" stroke-width="0.9"></line>
<line x1="1544.50" y1="626.00" x2="1544.50" y2="751.80" stroke="#e3e3e3" stroke-width="0.9"></line>
<line x1="1571.50" y1="626.00" x2="1571.50" y2="751.80" stroke="#e3e3e3" stroke-width="0.9"></line>
<line x1="1598.50" y1="626.00" x2="1598.50" y2="751.80" stroke="#e3e3e3" stroke-width="0.9"></line>
<line x1="1625.50" y1="626.00" x2="1625.50" y2="751.80" stroke="#e3e3e3" stroke-width="0.9"></line>
<rect x="1330.57" y="736.14" width="6.51" height="9.36" fill="#b391c3"></rect>
<rect x="1331.17" y="736.74" width="5.31" height="8.76" fill="#9467aa"></rect>
<rect x="1357.70" y="724.04" width="6.51" height="21.46" fill="#b391c3"></rect>
<rect x="1358.30" y="724.64" width="5.31" height="20.86" fill="#9467aa"></rect>
<rect x="1384.82" y="728.44" width="6.51" height="17.06" fill="#b391c3"></rect>
<rect x="1385.42" y="729.04" width="5.31" height="16.46" fill="#9467aa"></rect>
<rect x="1439.07" y="729.71" width="6.51" height="15.79" fill="#b391c3"></rect>
<rect x="1439.67" y="730.31" width="5.31" height="15.19" fill="#9467aa"></rect>
<rect x="1466.20" y="731.42" width="6.51" height="14.08" fill="#b391c3"></rect>
<rect x="1466.80" y="732.02" width="5.31" height="13.48" fill="#9467aa"></rect>
<rect x="1493.32" y="707.22" width="6.51" height="38.28" fill="#b391c3"></rect>
<rect x="1493.92" y="707.82" width="5.31" height="37.68" fill="#9467aa"></rect>
<rect x="1520.45" y="731.66" width="6.51" height="13.84" fill="#b391c3"></rect>
<rect x="1521.05" y="732.26" width="5.31" height="13.24" fill="#9467aa"></rect>
<rect x="1547.57" y="704.52" width="6.51" height="40.98" fill="#b391c3"></rect>
<rect x="1548.17" y="705.12" width="5.31" height="40.38" fill="#9467aa"></rect>
<rect x="1574.70" y="699.57" width="6.51" height="45.93" fill="#b391c3"></rect>
<rect x="1575.30" y="700.17" width="5.31" height="45.33" fill="#9467aa"></rect>
<rect x="1601.82" y="687.75" width="6.51" height="57.75" fill="#b391c3"></rect>
<rect x="1602.42" y="688.35" width="5.31" height="57.15" fill="#9467aa"></rect>
<rect x="1628.95" y="729.43" width="6.51" height="16.07" fill="#b391c3"></rect>
<rect x="1629.55" y="730.03" width="5.31" height="15.47" fill="#9467aa"></rect>
<rect x="1337.81" y="708.73" width="6.51" height="36.77" fill="#86bfd3"></rect>
<rect x="1338.41" y="709.33" width="5.31" height="36.17" fill="#4e9fbd"></rect>
<rect x="1364.93" y="734.87" width="6.51" height="10.63" fill="#86bfd3"></rect>
<rect x="1365.53" y="735.47" width="5.31" height="10.03" fill="#4e9fbd"></rect>
<rect x="1392.06" y="738.36" width="6.51" height="7.14" fill="#86bfd3"></rect>
<rect x="1392.66" y="738.96" width="5.31" height="6.54" fill="#4e9fbd"></rect>
<rect x="1419.18" y="727.49" width="6.51" height="18.01" fill="#86bfd3"></rect>
<rect x="1419.78" y="728.09" width="5.31" height="17.41" fill="#4e9fbd"></rect>
<rect x="1446.31" y="645.54" width="6.51" height="99.96" fill="#86bfd3"></rect>
<rect x="1446.91" y="646.14" width="5.31" height="99.36" fill="#4e9fbd"></rect>
<rect x="1473.43" y="702.30" width="6.51" height="43.20" fill="#86bfd3"></rect>
<rect x="1474.03" y="702.90" width="5.31" height="42.60" fill="#4e9fbd"></rect>
<rect x="1500.56" y="720.31" width="6.51" height="25.19" fill="#86bfd3"></rect>
<rect x="1501.16" y="720.91" width="5.31" height="24.59" fill="#4e9fbd"></rect>
<rect x="1527.68" y="712.42" width="6.51" height="33.08" fill="#86bfd3"></rect>
<rect x="1528.28" y="713.02" width="5.31" height="32.48" fill="#4e9fbd"></rect>
<rect x="1554.81" y="707.22" width="6.51" height="38.28" fill="#86bfd3"></rect>
<rect x="1555.41" y="707.82" width="5.31" height="37.68" fill="#4e9fbd"></rect>
<rect x="1581.93" y="707.50" width="6.51" height="38.00" fill="#86bfd3"></rect>
<rect x="1582.53" y="708.10" width="5.31" height="37.40" fill="#4e9fbd"></rect>
<rect x="1609.06" y="698.10" width="6.51" height="47.40" fill="#86bfd3"></rect>
<rect x="1609.66" y="698.70" width="5.31" height="46.80" fill="#4e9fbd"></rect>
<rect x="1636.18" y="725.51" width="6.51" height="19.99" fill="#86bfd3"></rect>
<rect x="1636.78" y="726.11" width="5.31" height="19.39" fill="#4e9fbd"></rect>
<rect x="1345.04" y="717.61" width="6.51" height="27.89" fill="#fbd794"></rect>
<rect x="1345.64" y="718.21" width="5.31" height="27.29" fill="#f9c25f"></rect>
<rect x="1372.17" y="698.57" width="6.51" height="46.93" fill="#fbd794"></rect>
<rect x="1372.77" y="699.17" width="5.31" height="46.33" fill="#f9c25f"></rect>
<rect x="1399.29" y="692.43" width="6.51" height="53.07" fill="#fbd794"></rect>
<rect x="1399.89" y="693.03" width="5.31" height="52.47" fill="#f9c25f"></rect>
<text x="1341.06" y="761.90" text-anchor="middle" class="ax">Jan.</text>
<text x="1368.19" y="761.90" text-anchor="middle" class="ax">Fév.</text>
<text x="1395.31" y="761.90" text-anchor="middle" class="ax">Mars</text>
<text x="1422.44" y="761.90" text-anchor="middle" class="ax">Avr.</text>
<text x="1449.56" y="761.90" text-anchor="middle" class="ax">Mai</text>
<text x="1476.69" y="761.90" text-anchor="middle" class="ax">Juin</text>
<text x="1503.81" y="761.90" text-anchor="middle" class="ax">Juil.</text>
<text x="1530.94" y="761.90" text-anchor="middle" class="ax">Août</text>
<text x="1558.06" y="761.90" text-anchor="middle" class="ax">Sep.</text>
<text x="1585.19" y="761.90" text-anchor="middle" class="ax">Oct.</text>
<text x="1612.31" y="761.90" text-anchor="middle" class="ax">Nov.</text>
<text x="1639.44" y="761.90" text-anchor="middle" class="ax">Déc.</text>
<text x="1466" y="594.00" text-anchor="middle" class="tt" textLength="83.5" lengthAdjust="spacingAndGlyphs">Montant moyen</text>
<rect x="1403.8" y="609.2" width="12.3" height="9.9" fill="#9467aa"></rect>
<text x="1420.00" y="615.90" class="lg">2024</text>
<rect x="1447.0" y="609.2" width="12.3" height="9.9" fill="#4e9fbd"></rect>
<text x="1463.20" y="615.90" class="lg">2025</text>
<rect x="1490.3" y="609.2" width="12.3" height="9.9" fill="#f9c25f"></rect>
<text x="1506.50" y="615.90" class="lg">2026</text>
</g>
</svg>

<!-- ================= TOOLTIP ================= -->
<div class="abs" style="left:62.500px;top:513px;width:115.500px;height:38px;background:#fff;border:1.500px solid #333"></div>
<div class="abs" id="tip" style="left: 74.8px; top: 522.7px; font-size: 17.6px; line-height: 20px; color: rgb(60, 60, 60); white-space: nowrap; transform: scaleX(0.984); transform-origin: left center;">Statistiques</div>
<div class="abs" style="left:-1px;top:478px;width:97px;height:28px;border:5px solid #ec1c24;border-radius:11px"></div>



</body></html>
